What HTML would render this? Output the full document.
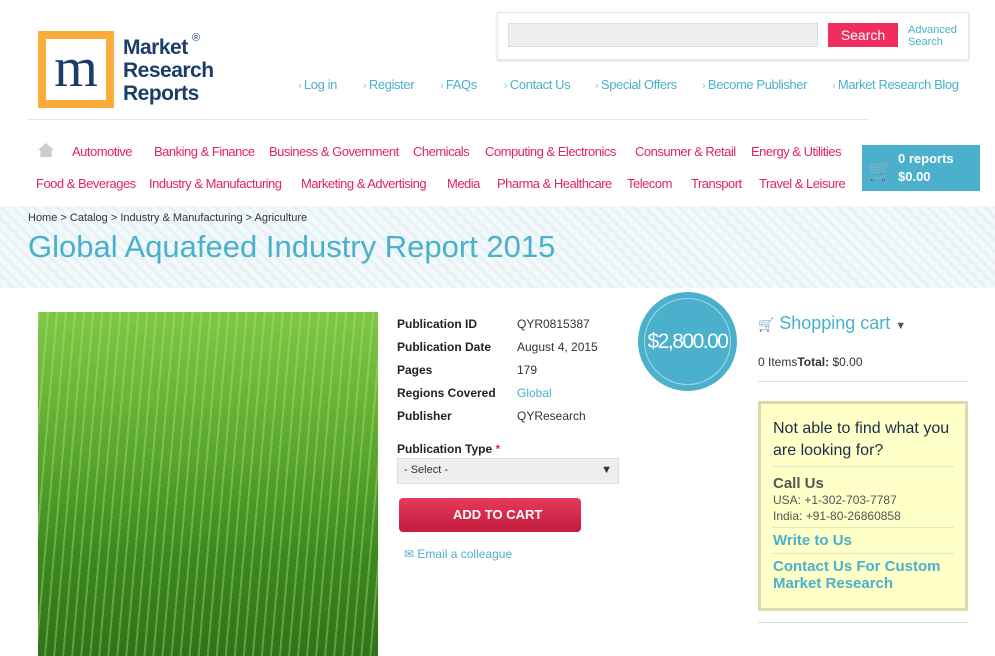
<!DOCTYPE html><html><head><style>
*{margin:0;padding:0;box-sizing:border-box}
body{width:995px;height:656px;overflow:hidden;background:#fff;font-family:"Liberation Sans",sans-serif;position:relative;font-size:12px;color:#333}
.a{position:absolute;white-space:nowrap}
.nav a{color:#e0245e;font-size:13px;letter-spacing:-0.5px;position:absolute;white-space:nowrap}
.tl{color:#4ab0cc;font-size:13px;letter-spacing:-0.4px;position:absolute;top:77px;white-space:nowrap}
.tl:before{content:"› ";font-size:11px;color:#8cc}
.k{font-weight:bold;color:#222}
</style></head><body>
<div class="a" style="left:38px;top:31px;width:76px;height:77px;background:#f9ab3c"></div>
<div class="a" style="left:46px;top:39px;width:60px;height:61px;background:#fff;font:56px 'Liberation Serif',serif;color:#1c3d6a;line-height:58px;text-align:center">m</div>
<div class="a" style="left:123px;top:36px;font-weight:bold;font-size:21px;line-height:23px;color:#1c3d6a;letter-spacing:-0.5px">Market<br>Research<br>Reports</div>
<div class="a" style="left:192px;top:32px;font-size:11px;color:#1c3d6a">®</div>
<div class="a" style="left:497px;top:12px;width:472px;height:48px;border:1px solid #e6e6e6;box-shadow:0 1px 3px #ddd"></div>
<div class="a" style="left:508px;top:23px;width:310px;height:24px;background:#eee;border:1px solid #ddd"></div>
<div class="a" style="left:828px;top:23px;width:70px;height:24px;background:#ef2d5e;color:#fff;font-size:14px;text-align:center;line-height:24px">Search</div>
<div class="a" style="left:908px;top:24px;font-size:11px;color:#4ab0cc;line-height:12px">Advanced<br>Search</div>
<span class="tl" style="left:298px">Log in</span><span class="tl" style="left:363px">Register</span><span class="tl" style="left:440px">FAQs</span><span class="tl" style="left:504px">Contact Us</span><span class="tl" style="left:595px">Special Offers</span><span class="tl" style="left:702px">Become Publisher</span><span class="tl" style="left:832px">Market Research Blog</span>
<div class="a" style="left:28px;top:119px;width:840px;height:1px;background:#e6e6e6"></div>
<div class="a" style="left:38px;top:143px;width:16px;height:14px;background:#ccc;clip-path:polygon(50% 0,100% 50%,85% 50%,85% 100%,15% 100%,15% 50%,0 50%)"></div>
<div class="nav">
<a style="left:72px;top:144px">Automotive</a><a style="left:154px;top:144px">Banking &amp; Finance</a><a style="left:269px;top:144px">Business &amp; Government</a><a style="left:413px;top:144px">Chemicals</a><a style="left:485px;top:144px">Computing &amp; Electronics</a><a style="left:635px;top:144px">Consumer &amp; Retail</a><a style="left:751px;top:144px">Energy &amp; Utilities</a>
<a style="left:36px;top:176px">Food &amp; Beverages</a><a style="left:149px;top:176px">Industry &amp; Manufacturing</a><a style="left:301px;top:176px">Marketing &amp; Advertising</a><a style="left:447px;top:176px">Media</a><a style="left:497px;top:176px">Pharma &amp; Healthcare</a><a style="left:627px;top:176px">Telecom</a><a style="left:691px;top:176px">Transport</a><a style="left:759px;top:176px">Travel &amp; Leisure</a></div>
<div class="a" style="left:862px;top:145px;width:118px;height:46px;background:#4ab0cc;color:#fff;font-weight:bold;font-size:13px;line-height:18px;padding:5px 0 0 36px">0 reports<br>$0.00</div>
<div class="a" style="left:868px;top:158px;color:#fff;font-size:20px">🛒</div>
<div class="a" style="left:0;top:206px;width:995px;height:82px;background:repeating-linear-gradient(45deg,#e6f2f6 0 3px,#f3f9fb 3px 8px)"></div>
<div class="a" style="left:28px;top:212px;font-size:11px;color:#333">Home &gt; Catalog &gt; Industry &amp; Manufacturing &gt; Agriculture</div>
<div class="a" style="left:28px;top:229px;font-size:31px;color:#4ab0cc">Global Aquafeed Industry Report 2015</div>
<div class="a" style="left:38px;top:312px;width:340px;height:344px;background:linear-gradient(180deg,#7ec845,#5aa82e 40%,#3c8a1f 70%,#2f7318);"></div>
<div class="a" style="left:38px;top:312px;width:340px;height:344px;background:repeating-linear-gradient(95deg,rgba(200,230,140,.35) 0 2px,transparent 2px 9px)"></div>
<div class="a" style="left:397px;top:313px;line-height:23px"><span class="k">Publication ID</span><br><span class="k">Publication Date</span><br><span class="k">Pages</span><br><span class="k">Regions Covered</span><br><span class="k">Publisher</span></div>
<div class="a" style="left:517px;top:313px;line-height:23px">QYR0815387<br>August 4, 2015<br>179<br><span style="color:#4ab0cc">Global</span><br>QYResearch</div>
<div class="a k" style="left:397px;top:442px">Publication Type <span style="color:#e0245e">*</span></div>
<div class="a" style="left:397px;top:458px;width:222px;height:26px;background:#eee;border:1px solid #ddd;padding:5px 6px;font-size:11px">- Select -<span style="float:right">▼</span></div>
<div class="a" style="left:399px;top:498px;width:182px;height:34px;background:linear-gradient(#e53a5c,#c41c3e);border-radius:4px;color:#fff;font-weight:bold;font-size:13px;line-height:34px;padding-left:54px">ADD TO CART</div>
<div class="a" style="left:404px;top:547px;color:#4ab0cc">✉ Email a colleague</div>
<div class="a" style="left:638px;top:292px;width:99px;height:99px;border-radius:50%;background:#4ab0cc"></div>
<div class="a" style="left:644px;top:298px;width:87px;height:87px;border-radius:50%;border:1px solid #a8d8e6;color:#fff;font-size:21px;letter-spacing:-1.5px;text-align:center;line-height:85px">$2,800.00</div>
<div class="a" style="left:758px;top:313px;font-size:18px;color:#4ab0cc"><span style="color:#555;font-size:13px">🛒</span> Shopping cart <span style="color:#555;font-size:11px">▼</span></div>
<div class="a" style="left:758px;top:355px">0 Items<b>Total:</b> $0.00</div>
<div class="a" style="left:758px;top:381px;width:210px;height:1px;background:#ddd"></div>
<div class="a" style="left:758px;top:401px;width:210px;height:210px;background:#ffffc8;border:3px solid #ddd8b0;padding:14px 12px;white-space:normal">
<div style="font-size:16px;color:#1c2d4a;line-height:22px;border-bottom:1px dotted #ccc;padding-bottom:4px">Not able to find what you are looking for?</div>
<div style="font-size:15px;font-weight:bold;color:#555;margin-top:8px">Call Us</div>
<div style="font-size:12px;color:#555;line-height:16px;border-bottom:1px dotted #ccc;padding-bottom:3px">USA: +1-302-703-7787<br>India: +91-80-26860858</div>
<div style="font-size:15px;font-weight:bold;color:#4ab0cc;margin-top:4px;border-bottom:1px dotted #ccc;padding-bottom:4px">Write to Us</div>
<div style="font-size:15px;font-weight:bold;color:#4ab0cc;margin-top:4px;line-height:17px">Contact Us For Custom Market Research</div></div>
<div class="a" style="left:758px;top:622px;width:210px;height:1px;background:#ddd"></div>
</body></html>
